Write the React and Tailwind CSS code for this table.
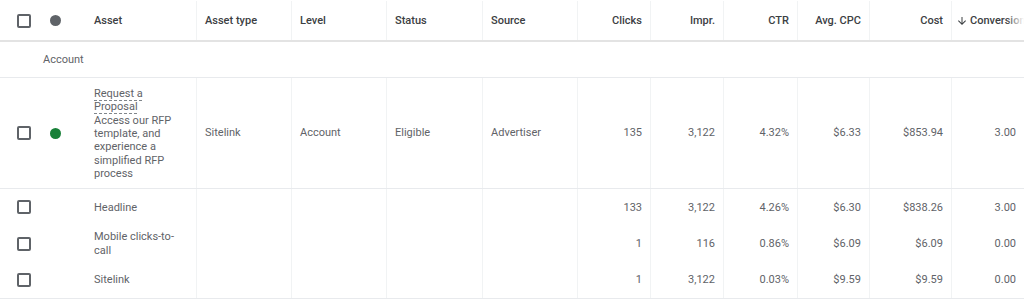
import React from "react";

const cols =
  "grid grid-cols-[40px_46px_110px_95px_95px_96px_95px_73px_73px_74px_72px_82px_73px]";

const Checkbox = () => (
  <span className="block w-[14px] h-[14px] border-2 border-[#5f6368] rounded-[2px]" />
);

const ArrowDown = () => (
  <svg viewBox="0 0 24 24" className="w-[12px] h-[12px] shrink-0" fill="#3c4043">
    <path d="M20 12l-1.41-1.41L13 16.17V4h-2v12.17l-5.58-5.59L4 12l8 8 8-8z" />
  </svg>
);

const headers = [
  { label: "Asset type" },
  { label: "Level" },
  { label: "Status" },
  { label: "Source" },
  { label: "Clicks", right: true },
  { label: "Impr.", right: true },
  { label: "CTR", right: true },
  { label: "Avg. CPC", right: true },
  { label: "Cost", right: true },
];

const subRows = [
  { asset: "Headline", nums: ["133", "3,122", "4.26%", "$6.30", "$838.26", "3.00"] },
  { asset: "Mobile clicks-to-call", nums: ["1", "116", "0.86%", "$6.09", "$6.09", "0.00"] },
  { asset: "Sitelink", nums: ["1", "3,122", "0.03%", "$9.59", "$9.59", "0.00"] },
];

const Cell = ({ children, right, className = "" }) => (
  <div
    className={`border-l border-[#f1f3f4] px-2 flex items-center ${
      right ? "justify-end text-right" : ""
    } ${className}`}
  >
    {children}
  </div>
);

export default function App() {
  return (
    <div
      className="w-[1024px] h-[300px] bg-white overflow-hidden text-[11px] leading-[13.33px] text-[#5f6368]"
      style={{ fontFamily: "Roboto, 'Liberation Sans', sans-serif" }}
    >
      {/* Header */}
      <div className={`${cols} h-[42px] pt-px border-b-2 border-[#e3e3e3] font-medium text-[#3c4043]`}>
        <div className="flex items-center pl-[17px]">
          <Checkbox />
        </div>
        <div className="flex items-center pl-[10px]">
          <span className="block w-[11px] h-[11px] rounded-full bg-[#5f6368]" />
        </div>
        <div className="flex items-center px-2">Asset</div>
        {headers.map((h) => (
          <Cell key={h.label} right={h.right}>
            {h.label}
          </Cell>
        ))}
        <div className="relative border-l border-[#f1f3f4] flex items-center gap-[2px] pl-[4px] overflow-hidden whitespace-nowrap">
          <ArrowDown />
          <span>Conversions</span>
          <span className="absolute right-0 top-0 bottom-0 w-[18px] bg-gradient-to-r from-transparent to-white" />
        </div>
      </div>

      {/* Account group */}
      <div className="h-[36px] pt-px border-b border-[#e8eaed] flex items-center pl-[43px]">
        Account
      </div>

      {/* Main asset row */}
      <div className={`${cols} border-b border-[#e8eaed]`}>
        <div className="flex items-center pl-[17px]">
          <Checkbox />
        </div>
        <div className="flex items-center pl-[10px]">
          <span className="block w-[11px] h-[11px] rounded-full bg-[#188038]" />
        </div>
        <div className="px-2 pt-[9px] pb-2">
          <span className="underline decoration-dashed decoration-[#80868b] underline-offset-[3px]">
            Request a Proposal
          </span>
          <div>Access our RFP template, and experience a simplified RFP process</div>
        </div>
        <Cell>Sitelink</Cell>
        <Cell>Account</Cell>
        <Cell>Eligible</Cell>
        <Cell>Advertiser</Cell>
        <Cell right>135</Cell>
        <Cell right>3,122</Cell>
        <Cell right>4.32%</Cell>
        <Cell right>$6.33</Cell>
        <Cell right>$853.94</Cell>
        <Cell right>3.00</Cell>
      </div>

      {/* Sub rows */}
      <div className="border-b border-[#e8eaed]">
        {subRows.map((r) => (
          <div key={r.asset} className={`${cols} min-h-[36px]`}>
            <div className="flex items-center pl-[17px]">
              <Checkbox />
            </div>
            <div />
            <div className="px-2 py-[5px] flex items-center">{r.asset}</div>
            <Cell />
            <Cell />
            <Cell />
            <Cell />
            {r.nums.map((n, i) => (
              <Cell key={i} right>
                {n}
              </Cell>
            ))}
          </div>
        ))}
      </div>
    </div>
  );
}
